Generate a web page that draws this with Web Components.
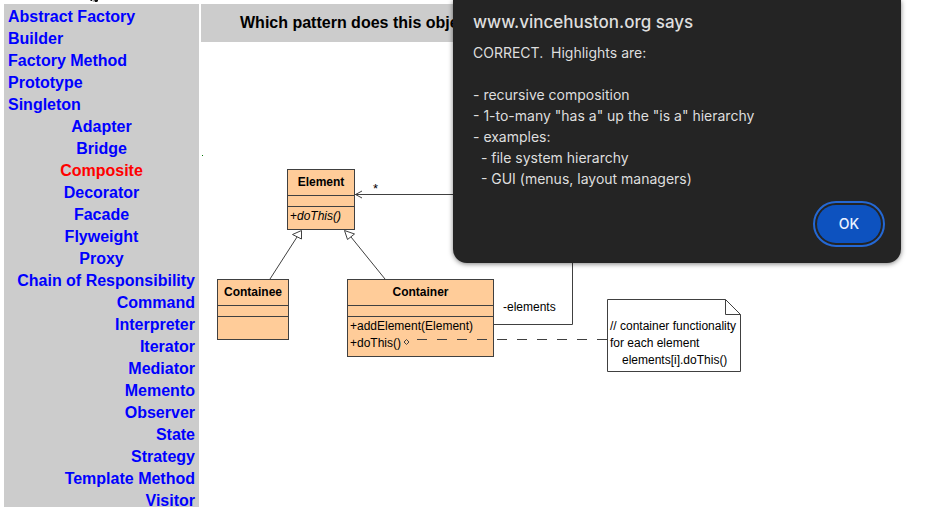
<!DOCTYPE html>
<html lang="en">
<head>
<meta charset="utf-8">
<title>Design Patterns Quiz</title>
<style>
  html, body { margin: 0; height: 100%; background: #fff; }
  body { overflow: hidden; font-family: "Liberation Sans", Arial, sans-serif; color: #000; }
</style>
</head>
<body>
<quiz-page></quiz-page>
<script>
const define = (name, html, setup) => customElements.define(name, class extends HTMLElement {
  constructor() {
    super();
    const t = document.createElement('template');
    t.innerHTML = html;
    this.attachShadow({ mode: 'open' }).append(t.content.cloneNode(true));
  }
  connectedCallback() { if (setup) setup(this, this.shadowRoot); }
});

define('pattern-link', `
<style>
  :host { display: block; line-height: 22px; text-align: left; }
  :host([group="structural"]) { text-align: center; }
  :host([group="behavioral"]) { text-align: right; }
  a { color: #00f; text-decoration: none; font-weight: bold; font-size: 16px; }
  :host([current]) a { color: #f00; }
</style>
<a href="#"><slot></slot></a>`);

define('pattern-menu', `
<style>
  :host { display: block; background: #ccc; padding: 2px 4px; box-sizing: border-box; }
</style>
<nav aria-label="Patterns"></nav>`, (el, root) => {
  const groups = {
    creational: ['Abstract Factory', 'Builder', 'Factory Method', 'Prototype', 'Singleton'],
    structural: ['Adapter', 'Bridge', 'Composite', 'Decorator', 'Facade', 'Flyweight', 'Proxy'],
    behavioral: ['Chain of Responsibility', 'Command', 'Interpreter', 'Iterator', 'Mediator',
      'Memento', 'Observer', 'State', 'Strategy', 'Template Method', 'Visitor']
  };
  const nav = root.querySelector('nav');
  for (const [group, names] of Object.entries(groups)) {
    for (const name of names) {
      const link = document.createElement('pattern-link');
      link.setAttribute('group', group);
      if (name === 'Composite') link.setAttribute('current', '');
      link.textContent = name;
      nav.append(link);
    }
  }
});

define('quiz-question', `
<style>
  :host { display: block; width: fit-content; background: #ccc; padding: 8px 39px; }
  h1 { margin: 0; font-size: 16px; line-height: 22px; font-weight: bold; white-space: nowrap; }
</style>
<h1><slot></slot></h1>`);

define('uml-class', `
<style>
  :host { display: block; box-sizing: border-box; border: 1px solid #404040; background: #fc9;
    font-size: 12px; line-height: 17px; white-space: nowrap; }
  .name { font-weight: bold; text-align: center; line-height: 25px; }
  .attributes { height: 10px; border: solid #404040; border-width: 1px 0; }
  .operations { padding: 1px 2px 4px; min-height: 17px; }
</style>
<div class="name"><slot name="name"></slot></div>
<div class="attributes"></div>
<div class="operations"><slot></slot></div>`);

define('uml-note', `
<style>
  :host { display: block; box-sizing: border-box; font-size: 12px; line-height: 17px; white-space: nowrap;
    padding: 19px 3px 3px; }
</style>
<slot></slot>`);

define('uml-diagram', `
<style>
  :host { display: block; position: relative; isolation: isolate; }
  svg { display: block; }
  .node { position: absolute; }
  .element { left: 86px; top: 127px; width: 68px; }
  .containee { left: 16px; top: 237px; width: 72px; }
  .container { left: 146px; top: 237px; width: 147px; }
  .note { left: 406px; top: 257px; width: 134px; }
  .label { font-size: 12px; line-height: 17px; }
  .many { left: 172px; top: 138px; font-size: 13px; }
  .role { left: 302px; top: 257px; }
  .indent { padding-left: 12px; }
  .ticks { z-index: 1; left: 0; top: 0; }
</style>
<uml-class class="node element"><span slot="name">Element</span><div>+<i>doThis()</i></div></uml-class>
<uml-class class="node containee"><span slot="name">Containee</span></uml-class>
<uml-class class="node container"><span slot="name">Container</span><div>+addElement(Element)</div><div>+doThis()</div></uml-class>
<svg class="node ticks" width="700" height="400" viewBox="201 42 700 400" fill="none" stroke="#404040" aria-hidden="true">
  <path d="M355 194.500H572.500V324.500H494"/>
  <path d="M362 191L355.500 194.500L362 198"/>
  <path d="M297 237L270 279M351 237L385 279"/>
  <path fill="#fff" d="M301.500 230.500V239L292.500 234.500ZM344.500 230.500L354.500 234L347.500 239.500Z"/>
  <path d="M417 339.500H607" stroke-dasharray="10 10"/>
  <path d="M406.500 339.500L409 342L406.500 344.500L404 342Z"/>
  <path d="M607.500 299.500H725.500L740.500 314.500V371.500H607.500ZM725.500 299.500V314.500H740.500"/>
  <path d="M202 155.500H203" stroke="#070"/>
</svg>
<span class="node label many">*</span>
<span class="node label role">-elements</span>
<uml-note class="node note"><div>// container functionality</div><div>for each element</div><div class="indent">elements[i].doThis()</div></uml-note>`);

define('alert-box', `
<style>
  :host { display: block; position: absolute; z-index: 2; top: 0; right: 28px; width: 448px;
    font-family: Inter, Roboto, sans-serif; }
  section { box-sizing: border-box; background: #242424; color: #dedede; border-radius: 0 0 14px 14px;
    padding: 10px 20px 20px; box-shadow: 0 1px 5px rgba(0,0,0,.5); }
  h2 { margin: 0 0 8px; font-size: 17px; line-height: 24px; font-weight: 500; }
  .message { font-size: 14px; line-height: 21px; white-space: pre-wrap; }
  footer { display: flex; justify-content: flex-end; margin-top: 16px; }
  button { width: 64px; height: 38px; border: 0; border-radius: 19px; padding: 0 0 1px; background: #0d52bf;
    color: #eaf1ff; font: 500 14px Inter, Roboto, sans-serif; outline: 2px solid #2468d4; outline-offset: 2px; }
</style>
<section role="alertdialog" aria-labelledby="title" aria-describedby="message">
  <h2 id="title"><slot name="title"></slot></h2>
  <div class="message" id="message"><slot></slot></div>
  <footer><button type="button">OK</button></footer>
</section>`);

define('quiz-page', `
<style>
  :host { display: flex; gap: 2px; padding: 4px 0 0 4px; box-sizing: border-box; min-height: 100%; position: relative; }
  pattern-menu { flex: 0 0 195px; }
  main { flex: 1; min-width: 0; }
  .cursor { position: absolute; left: 88px; top: 0; }
</style>
<svg class="cursor" width="12" height="4" viewBox="0 0 12 4" aria-hidden="true">
  <path d="M2 0H4V1H3ZM6 0H10V1L9 2H7Z" fill="#111"/><path d="M4 0H6L7 2H5Z" fill="#bbb"/>
</svg>
<pattern-menu></pattern-menu>
<main>
  <quiz-question>Which pattern does this object</quiz-question>
  <uml-diagram></uml-diagram>
</main>
<alert-box><span slot="title">www.vincehuston.org says</span>CORRECT.  Highlights are:

- recursive composition
- 1-to-many "has a" up the "is a" hierarchy
- examples:
  - file system hierarchy
  - GUI (menus, layout managers)</alert-box>`);
</script>
</body>
</html>
